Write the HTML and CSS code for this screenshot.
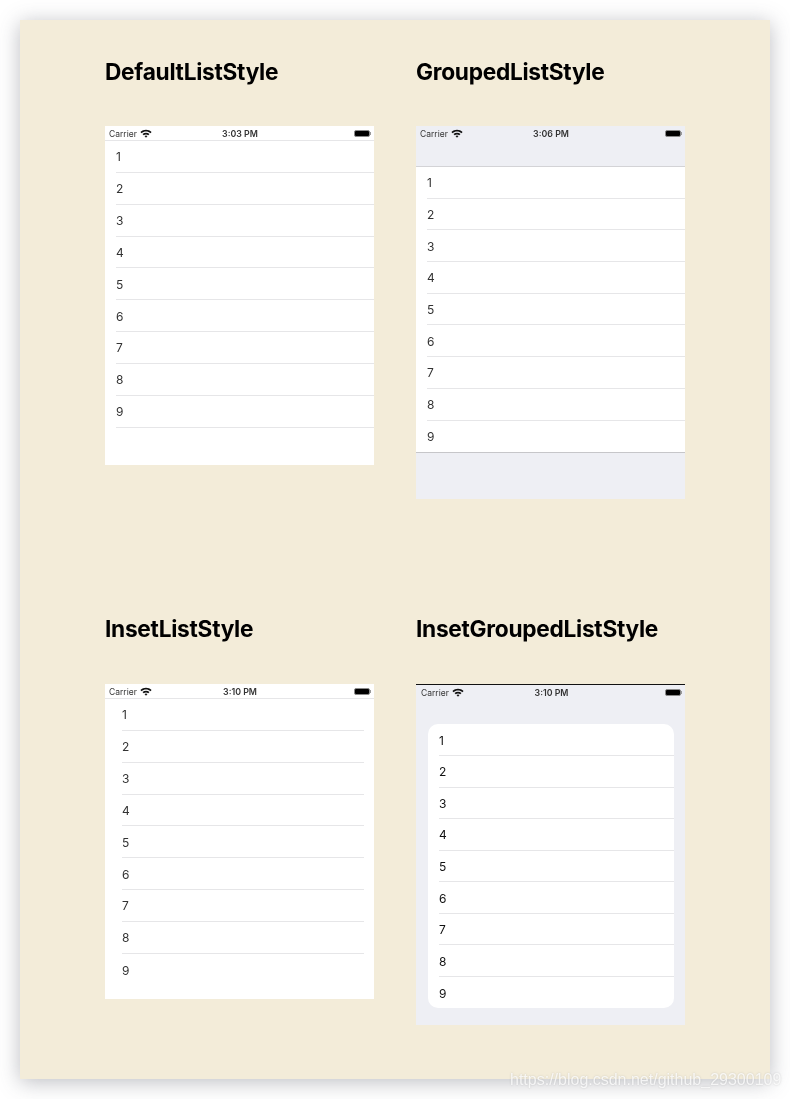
FILE: index.html
```html
<!DOCTYPE html>
<html lang="en">
<head>
<meta charset="utf-8">
<title>SwiftUI List Styles</title>
<link rel="stylesheet" href="styles.css">
</head>
<body>
<svg class="defs" width="0" height="0" aria-hidden="true">
  <symbol id="wifi" viewBox="0 0 12 9">
    <path d="M.4 3.1C3.5.1 8.5.1 11.6 3.1L10.4 4.3C8 2 4 2 1.6 4.3Z"/>
    <path d="M2.5 5.1C4.5 3.4 7.5 3.4 9.5 5.1L8.3 6.3C7 5.1 5 5.1 3.7 6.3Z"/>
    <path d="M4.5 7.1C5.4 6.4 6.6 6.4 7.5 7.1L6 8.8Z"/>
  </symbol>
</svg>
<main class="page">
  <section class="cell">
    <h2 class="title">DefaultListStyle</h2>
    <div class="phone phone-default">
      <div class="status"><span class="carrier">Carrier<svg class="wifi"><use href="#wifi"/></svg></span><span class="time">3:03 PM</span><span class="battery-wrap"><i class="battery"></i><i class="nub"></i></span></div>
      <ul class="list">
        <li>1</li><li>2</li><li>3</li><li>4</li><li>5</li><li>6</li><li>7</li><li>8</li><li>9</li>
      </ul>
    </div>
  </section>
  <section class="cell">
    <h2 class="title">GroupedListStyle</h2>
    <div class="phone phone-grouped">
      <div class="status"><span class="carrier">Carrier<svg class="wifi"><use href="#wifi"/></svg></span><span class="time">3:06 PM</span><span class="battery-wrap"><i class="battery"></i><i class="nub"></i></span></div>
      <ul class="list">
        <li>1</li><li>2</li><li>3</li><li>4</li><li>5</li><li>6</li><li>7</li><li>8</li><li>9</li>
      </ul>
    </div>
  </section>
  <section class="cell">
    <h2 class="title">InsetListStyle</h2>
    <div class="phone phone-inset">
      <div class="status"><span class="carrier">Carrier<svg class="wifi"><use href="#wifi"/></svg></span><span class="time">3:10 PM</span><span class="battery-wrap"><i class="battery"></i><i class="nub"></i></span></div>
      <ul class="list">
        <li>1</li><li>2</li><li>3</li><li>4</li><li>5</li><li>6</li><li>7</li><li>8</li><li>9</li>
      </ul>
    </div>
  </section>
  <section class="cell">
    <h2 class="title">InsetGroupedListStyle</h2>
    <div class="phone phone-inset-grouped">
      <div class="status"><span class="carrier">Carrier<svg class="wifi"><use href="#wifi"/></svg></span><span class="time">3:10 PM</span><span class="battery-wrap"><i class="battery"></i><i class="nub"></i></span></div>
      <ul class="list">
        <li>1</li><li>2</li><li>3</li><li>4</li><li>5</li><li>6</li><li>7</li><li>8</li><li>9</li>
      </ul>
    </div>
  </section>
</main>
<div class="watermark">https://blog.csdn.net/github_29300109</div>
</body>
</html>
```
FILE: styles.css
```css
* { box-sizing: border-box; }
html, body { margin: 0; padding: 0; }
body {
  position: relative;
  width: 790px;
  height: 1099px;
  padding: 20px;
  background: #fff;
  font-family: Inter, "Liberation Sans", sans-serif;
  overflow: hidden;
}
.defs { position: absolute; }
.page {
  width: 750px;
  height: 1059px;
  padding: 32px 85px 0;
  background: #f3ecd9;
  box-shadow: 0 3px 20px rgba(80, 82, 95, .38);
  display: grid;
  grid-template-columns: 269px 269px;
  grid-template-rows: 447px auto;
  column-gap: 42px;
  row-gap: 110px;
  align-content: start;
}
.cell { display: flex; flex-direction: column; align-items: stretch; }
.title {
  margin: 0 0 35px;
  height: 39px;
  padding-top: 1px;
  line-height: 38px;
  font-size: 22.7px;
  font-weight: 700;
  letter-spacing: -.28px;
  color: #000;
  filter: blur(.3px);
}
.phone { background: #fff; display: flex; flex-direction: column; flex: none; filter: blur(.35px); }
.phone-default { height: 339px; }
.phone-grouped { height: 373px; background: #eeeff4; }
.phone-inset { height: 315px; margin-top: 1px; }
.phone-inset-grouped { height: 341px; margin-top: 1px; background: #eeeff4; border-top: 1.5px solid #111; }

.status {
  height: 14px;
  padding: 1px 3px 0 4px;
  display: grid;
  grid-template-columns: 1fr auto 1fr;
  align-items: center;
  font-size: 8.5px;
  color: #333;
  flex: none;
}
.carrier { display: flex; align-items: center; gap: 3px; }
.wifi { width: 12px; height: 9px; fill: #111; }
.time { font-weight: 600; font-size: 8.8px; }
.battery-wrap { justify-self: end; display: flex; align-items: center; }
.battery {
  display: block;
  width: 16px;
  height: 7px;
  background: #000;
  border: 1px solid #8a8a8a;
  border-radius: 2px;
}
.nub { display: block; width: 1px; height: 3px; background: #999; }

.list { list-style: none; margin: 0; padding: 0 0 0 11px; background: #fff; flex: none; }
.list li {
  height: 31.85px;
  padding-top: 1px;
  display: flex;
  align-items: center;
  font-size: 12px;
  color: #333;
  border-bottom: 1px solid #e6e6e8;
}

.phone-default .list { border-top: 1px solid #e6e6e8; }
.phone-grouped .list {
  margin-top: 26px;
  border-top: 1px solid #d3d3d6;
  border-bottom: 1px solid #c6c6c9;
}
.phone-grouped .list li { height: 31.7px; }
.phone-grouped .list li:last-child { border-bottom: 0; }
.phone-inset .list { padding: 0 10px 0 17px; border-top: 1px solid #e6e6e8; }
.phone-inset .list li:last-child { border-bottom: 0; }
.phone-inset-grouped .status { padding-left: 5px; }
.phone-inset-grouped .list {
  margin: 24.5px 11px 0 12px;
  padding: 1px 0 0 11px;
  border-radius: 10px;
  height: 284px;
}
.phone-inset-grouped .list li { height: 31.55px; color: #111; }
.phone-inset-grouped .list li:last-child { border-bottom: 0; }

.watermark {
  position: absolute;
  left: 510px;
  top: 1071px;
  font-family: "Liberation Sans", sans-serif;
  font-size: 16px;
  line-height: 18px;
  color: rgba(255, 255, 255, .8);
  text-shadow: 0 0 2px rgba(140, 140, 140, .4);
  white-space: nowrap;
  filter: blur(.5px);
}
```
